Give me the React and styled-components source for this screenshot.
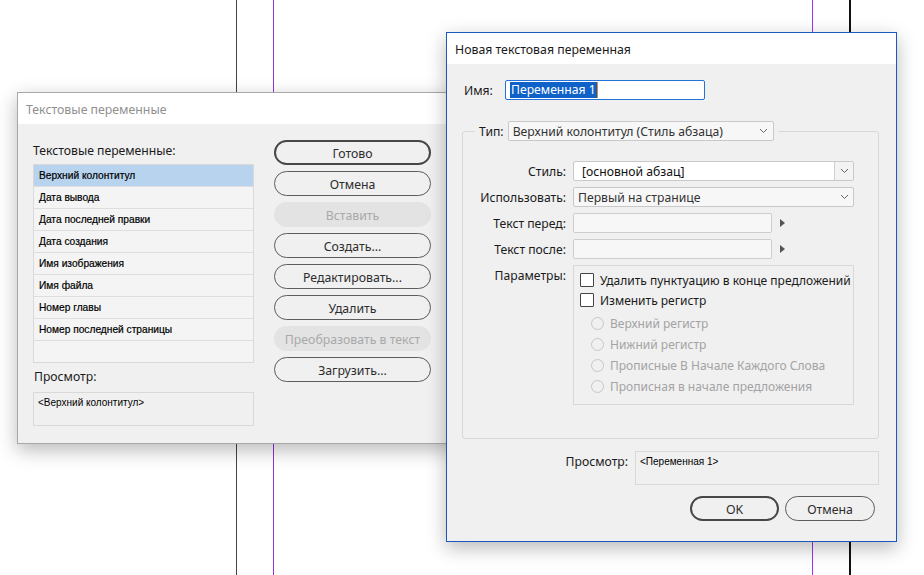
import React from "react";
import styled, { createGlobalStyle } from "styled-components";

const GlobalStyle = createGlobalStyle`
  html, body {
    margin: 0;
    padding: 0;
    background: #ffffff;
  }
  body {
    font-family: "Noto Sans", "Open Sans", sans-serif;
    font-size: 12px;
    color: #222;
  }
`;

const Canvas = styled.div`
  position: relative;
  width: 924px;
  height: 575px;
  overflow: hidden;
  background: #fff;
`;

const Guide = styled.div`
  position: absolute;
  top: 0;
  bottom: 0;
  left: ${(p) => p.x}px;
  width: ${(p) => p.w || 1}px;
  background: ${(p) => p.color};
`;

const Window = styled.div`
  position: absolute;
  left: ${(p) => p.x}px;
  top: ${(p) => p.y}px;
  width: ${(p) => p.w}px;
  height: ${(p) => p.h}px;
  box-sizing: border-box;
  border: 1px solid ${(p) => (p.active ? "#1b58bc" : "#a8a8a8")};
  background: #f0f0f0;
  box-shadow: 0 6px 18px rgba(0, 0, 0, 0.28);
  display: flex;
  flex-direction: column;
`;

const TitleBar = styled.div`
  height: 31px;
  flex-shrink: 0;
  box-sizing: border-box;
  padding: 2px 0 0 8px;
  background: #fff;
  display: flex;
  align-items: center;
  font-size: 12.3px;
  color: ${(p) => (p.active ? "#1a1a1a" : "#8f8f8f")};
`;

/* ---------- left dialog ---------- */

const LeftBody = styled.div`
  display: grid;
  grid-template-columns: 221px 157px;
  column-gap: 20px;
  padding: 16px 0 0 15px;
`;

const Column = styled.div`
  display: flex;
  flex-direction: column;
`;

const Caption = styled.div`
  line-height: 20px;
  padding-top: 1px;
  height: 20px;
  box-sizing: border-box;
  font-size: 12.2px;
  color: #1a1a1a;
  margin: ${(p) => p.m || "0"};
`;

const VarList = styled.div`
  height: 199px;
  box-sizing: border-box;
  border: 1px solid #d9d9d9;
  background: #f4f4f4;
  margin-top: 4px;
`;

const VarRow = styled.div`
  height: 22px;
  box-sizing: border-box;
  border-bottom: 1px solid #dedede;
  background: ${(p) => (p.selected ? "#b8d3ee" : "transparent")};
  display: flex;
  align-items: center;
  padding-left: 5px;
  font-family: "Liberation Sans", Arial, sans-serif;
  font-size: 10.2px;
  color: #000;
  -webkit-text-stroke: 0.2px #000;
`;

const PreviewBox = styled.div`
  height: ${(p) => p.h || 34}px;
  width: ${(p) => (p.w ? p.w + "px" : "auto")};
  box-sizing: border-box;
  border: 1px solid #d9d9d9;
  padding: 4px 4px;
  font-family: "Liberation Sans", Arial, sans-serif;
  font-size: 10px;
  color: #000;
  margin-top: ${(p) => p.mt || 0}px;
`;

const ButtonStack = styled.div`
  display: flex;
  flex-direction: column;
  gap: 6px;
`;

const Button = styled.div`
  width: ${(p) => (p.w ? p.w + "px" : "auto")};
  height: 25px;
  box-sizing: border-box;
  border-radius: 13px;
  padding-top: 1px;
  display: flex;
  align-items: center;
  justify-content: center;
  font-size: 12.3px;
  color: ${(p) => (p.disabled ? "#a9a9a9" : "#2d2d2d")};
  background: ${(p) => (p.disabled ? "#e3e3e3" : "transparent")};
  border: ${(p) =>
    p.disabled ? "none" : p.primary ? "2px solid #474747" : "1px solid #5c5c5c"};
`;

/* ---------- right dialog ---------- */

const RightBody = styled.div`
  display: flex;
  flex-direction: column;
  padding: 16px 17px 0 15px;
`;

const NameRow = styled.div`
  display: grid;
  grid-template-columns: 41px 200px;
  align-items: center;
  padding-left: 2px;
`;

const Label = styled.div`
  font-size: 12.2px;
  color: #1a1a1a;
  line-height: 20px;
  height: 20px;
  padding-top: 1px;
  box-sizing: border-box;
  white-space: nowrap;
  text-align: ${(p) => p.align || "left"};
`;

const NameInput = styled.div`
  width: 200px;
  height: 20px;
  box-sizing: border-box;
  border: 1px solid #2673d8;
  border-radius: 2px;
  background: #fff;
  display: flex;
  align-items: center;
  padding-left: 4px;
`;

const Selected = styled.span`
  background: #0f62c8;
  color: #fff;
  font-size: 12.2px;
  line-height: 16px;
  padding: 0 1px;
  border-right: 1px solid #e08a1e;
`;

const Group = styled.fieldset`
  margin: 21px 0 0 0;
  padding: 0 0 33px 0;
  border: 1px solid #d8d8d8;
  border-radius: 3px;
  min-width: 0;
`;

const Legend = styled.legend`
  margin-left: 12px;
  padding: 0 4px;
  display: flex;
  align-items: center;
  gap: 4px;
`;

const Select = styled.div`
  width: ${(p) => p.w}px;
  height: 20px;
  box-sizing: border-box;
  border: 1px solid #c9c9c9;
  border-radius: 2px;
  background: ${(p) => (p.white ? "#fff" : "#f7f7f7")};
  display: flex;
  align-items: center;
  font-size: 12.2px;
  color: ${(p) => (p.white ? "#111" : "#333")};
  overflow: hidden;
`;

const SelectText = styled.div`
  flex: 1;
  padding-left: ${(p) => p.pl || 4}px;
  padding-top: 1px;
  white-space: nowrap;
`;

const ArrowCell = styled.div`
  width: 18px;
  align-self: stretch;
  display: flex;
  align-items: center;
  justify-content: center;
  border-left: ${(p) => (p.split ? "1px solid #cfcfcf" : "none")};
  background: ${(p) => (p.split ? "#f3f3f3" : "transparent")};
`;

const FormGrid = styled.div`
  display: grid;
  grid-template-columns: 103px 1fr;
  column-gap: 7px;
  row-gap: 6px;
  padding-top: 20px;
`;

const FieldLine = styled.div`
  display: flex;
  align-items: center;
  gap: 8px;
`;

const TextField = styled.div`
  width: 199px;
  height: 20px;
  box-sizing: border-box;
  border: 1px solid #cdcdcd;
  border-radius: 2px;
  background: #f7f7f7;
`;

const Triangle = styled.div`
  width: 0;
  height: 0;
  border-top: 4px solid transparent;
  border-bottom: 4px solid transparent;
  border-left: 5px solid #555;
`;

const OptionsBox = styled.div`
  width: 281px;
  height: 140px;
  box-sizing: border-box;
  border: 1px solid #d8d8d8;
  padding: 4px 0 0 6px;
  display: flex;
  flex-direction: column;
`;

const CheckRow = styled.div`
  height: 20px;
  display: flex;
  align-items: center;
  gap: 6px;
  font-size: 12px;
  color: #1a1a1a;
  white-space: nowrap;
`;

const Checkbox = styled.div`
  width: 12px;
  height: 12px;
  flex-shrink: 0;
  border: 1px solid #444;
  border-radius: 1px;
  background: #fff;
`;

const RadioList = styled.div`
  display: flex;
  flex-direction: column;
  padding: 3px 0 0 11px;
`;

const RadioRow = styled.div`
  height: 21px;
  display: flex;
  align-items: center;
  gap: 6px;
  font-size: 12px;
  color: #a3a3a3;
  white-space: nowrap;
`;

const Radio = styled.div`
  width: 11px;
  height: 11px;
  flex-shrink: 0;
  border: 1px solid #c7c7c7;
  border-radius: 50%;
`;

const PreviewRow = styled.div`
  display: flex;
  justify-content: flex-end;
  align-items: flex-start;
  gap: 7px;
  margin-top: 12px;
`;

const FooterButtons = styled.div`
  display: flex;
  justify-content: flex-end;
  gap: 6px;
  margin-top: 11px;
  padding-right: 4px;
`;

const Chevron = () => (
  <svg width="9" height="6" viewBox="0 0 9 6">
    <path d="M1 1 L4.5 4.5 L8 1" fill="none" stroke="#666" strokeWidth="1" />
  </svg>
);

const variables = [
  "Верхний колонтитул",
  "Дата вывода",
  "Дата последней правки",
  "Дата создания",
  "Имя изображения",
  "Имя файла",
  "Номер главы",
  "Номер последней страницы",
];

const leftButtons = [
  { label: "Готово", primary: true },
  { label: "Отмена" },
  { label: "Вставить", disabled: true },
  { label: "Создать..." },
  { label: "Редактировать..." },
  { label: "Удалить" },
  { label: "Преобразовать в текст", disabled: true },
  { label: "Загрузить..." },
];

const cases = [
  "Верхний регистр",
  "Нижний регистр",
  "Прописные В Начале Каждого Слова",
  "Прописная в начале предложения",
];

export default function App() {
  return (
    <Canvas>
      <GlobalStyle />
      <Guide x={236} color="#454545" />
      <Guide x={273} color="#9431e0" />
      <Guide x={812} color="#a032f0" />
      <Guide x={849} w={2} color="#111" />

      <Window x={17} y={92} w={440} h={352}>
        <TitleBar>Текстовые переменные</TitleBar>
        <LeftBody>
          <Column>
            <Caption>Текстовые переменные:</Caption>
            <VarList>
              {variables.map((v, i) => (
                <VarRow key={v} selected={i === 0}>
                  {v}
                </VarRow>
              ))}
            </VarList>
            <Caption m="3px 0 0 1px">Просмотр:</Caption>
            <PreviewBox mt={6}>&lt;Верхний колонтитул&gt;</PreviewBox>
          </Column>
          <ButtonStack>
            {leftButtons.map((b) => (
              <Button key={b.label} primary={b.primary} disabled={b.disabled}>
                {b.label}
              </Button>
            ))}
          </ButtonStack>
        </LeftBody>
      </Window>

      <Window active x={446} y={32} w={451} h={510}>
        <TitleBar active>Новая текстовая переменная</TitleBar>
        <RightBody>
          <NameRow>
            <Label>Имя:</Label>
            <NameInput>
              <Selected>Переменная 1</Selected>
            </NameInput>
          </NameRow>

          <Group>
            <Legend>
              <Label>Тип:</Label>
              <Select w={266}>
                <SelectText>Верхний колонтитул (Стиль абзаца)</SelectText>
                <ArrowCell>
                  <Chevron />
                </ArrowCell>
              </Select>
            </Legend>

            <FormGrid>
              <Label align="right">Стиль:</Label>
              <Select w={281} white>
                <SelectText pl={8}>[основной абзац]</SelectText>
                <ArrowCell split>
                  <Chevron />
                </ArrowCell>
              </Select>

              <Label align="right">Использовать:</Label>
              <Select w={281}>
                <SelectText>Первый на странице</SelectText>
                <ArrowCell>
                  <Chevron />
                </ArrowCell>
              </Select>

              <Label align="right">Текст перед:</Label>
              <FieldLine>
                <TextField />
                <Triangle />
              </FieldLine>

              <Label align="right">Текст после:</Label>
              <FieldLine>
                <TextField />
                <Triangle />
              </FieldLine>

              <Label align="right">Параметры:</Label>
              <OptionsBox>
                <CheckRow>
                  <Checkbox />
                  Удалить пунктуацию в конце предложений
                </CheckRow>
                <CheckRow>
                  <Checkbox />
                  Изменить регистр
                </CheckRow>
                <RadioList>
                  {cases.map((c) => (
                    <RadioRow key={c}>
                      <Radio />
                      {c}
                    </RadioRow>
                  ))}
                </RadioList>
              </OptionsBox>
            </FormGrid>
          </Group>

          <PreviewRow>
            <Label>Просмотр:</Label>
            <PreviewBox w={244}>&lt;Переменная 1&gt;</PreviewBox>
          </PreviewRow>

          <FooterButtons>
            <Button primary w={89}>
              OK
            </Button>
            <Button w={90}>Отмена</Button>
          </FooterButtons>
        </RightBody>
      </Window>
    </Canvas>
  );
}
